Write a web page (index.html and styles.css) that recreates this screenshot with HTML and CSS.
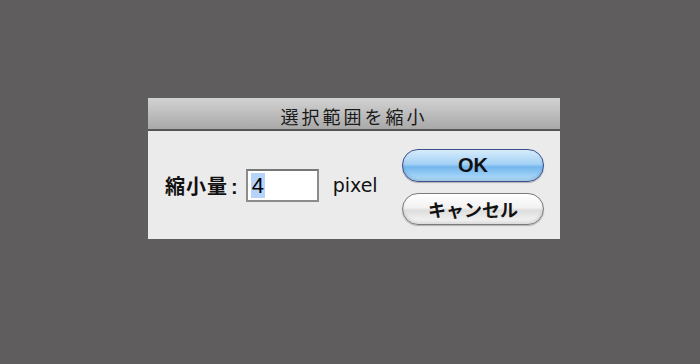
FILE: index.html
```html
<!DOCTYPE html>
<html lang="ja">
<head>
  <meta charset="UTF-8" />
  <title>選択範囲を縮小</title>
  <link rel="stylesheet" href="styles.css">
</head>
<body>
  <div class="dialog">
    <div class="titlebar">選択範囲を縮小</div>
    <div class="content">
      <div class="field">
        <span class="label">縮小量<span class="colon">:</span></span>
        <span class="input"><span class="sel">4</span></span>
        <span class="unit">pixel</span>
      </div>
      <div class="buttons">
        <button type="button" class="btn btn-ok">OK</button>
        <button type="button" class="btn">キャンセル</button>
      </div>
    </div>
  </div>
</body>
</html>
```

FILE: styles.css
```css
body {
  margin: 0;
  width: 700px;
  height: 364px;
  background: #5f5d5e;
  font-family: "Noto Sans CJK JP", "Liberation Sans", sans-serif;
  padding: 98px 0 0 148px;
  box-sizing: border-box;
}

.dialog {
  width: 412px;
  background: #ebebeb;
}

.titlebar {
  height: 33px;
  box-sizing: border-box;
  padding-top: 5px;
  line-height: 26px;
  text-align: center;
  font-size: 18px;
  letter-spacing: 3px;
  color: #1a1a1a;
  background: linear-gradient(#d2d2d2, #a9a9a9);
  border-bottom: 2px solid #555;
}

.content {
  height: 108px;
  box-sizing: border-box;
  padding: 0 16px 0 17px;
  display: flex;
  align-items: center;
  justify-content: space-between;
}

.field {
  display: flex;
  align-items: center;
}

.label {
  font-size: 20px;
  font-weight: bold;
  letter-spacing: 1px;
  color: #111;
  margin-right: 7px;
}

.colon {
  font-family: "Liberation Sans", sans-serif;
  margin-left: 3px;
}

.input {
  width: 73px;
  height: 33px;
  box-sizing: border-box;
  background: #fff;
  border: 2px solid #8c8c8c;
  border-top-color: #777;
  padding: 2px 0 0 3px;
  font-family: "Liberation Sans", sans-serif;
  font-size: 22px;
  line-height: 25px;
  color: #000;
}

.sel {
  background: #b5d3fb;
  display: inline-block;
  padding: 0 1px;
}

.unit {
  margin-left: 14px;
  font-family: "DejaVu Sans", sans-serif;
  font-size: 19px;
  color: #111;
}

.buttons {
  display: flex;
  flex-direction: column;
  gap: 11px;
  padding-top: 4px;
}

.btn {
  width: 142px;
  height: 32px;
  border-radius: 16px;
  border: 1px solid #7a7a7a;
  background: linear-gradient(#ffffff 0%, #f2f2f2 45%, #dedede 55%, #f8f8f8 100%);
  box-shadow: inset 0 -2px 3px rgba(0, 0, 0, 0.12), 0 1px 1px rgba(0, 0, 0, 0.25);
  font-family: "Noto Sans CJK JP", "Liberation Sans", sans-serif;
  font-size: 18px;
  font-weight: bold;
  color: #111;
  padding: 0;
}

.btn-ok {
  height: 33px;
  border-color: #3e4f8e;
  background: linear-gradient(#d6ecfb 0%, #a5d2f6 45%, #74b7ee 55%, #b6e0fb 100%);
  font-family: "Liberation Sans", sans-serif;
  font-size: 20px;
}
```
